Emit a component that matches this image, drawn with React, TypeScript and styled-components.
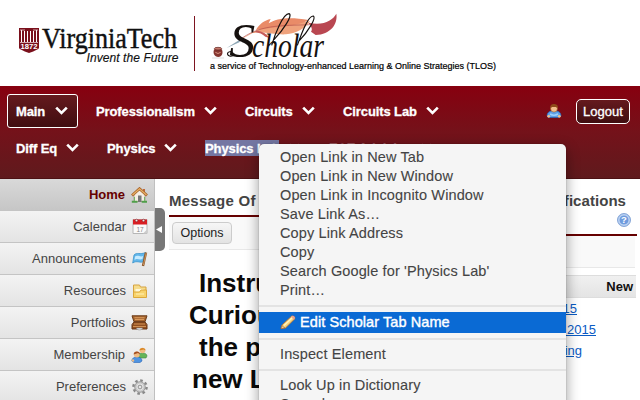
import React from "react";
import styled, { createGlobalStyle, css } from "styled-components";

const Global = createGlobalStyle`
  * { box-sizing: border-box; }
  body { margin: 0; background: #fff; overflow: hidden; }
`;

const Page = styled.div`
  position: relative;
  width: 640px;
  height: 400px;
  overflow: hidden;
  background: #fff;
  color: #444;
  font-family: "Liberation Sans", Arial, sans-serif;
  display: flex;
  flex-direction: column;
`;

const Banner = styled.header`
  flex: none;
  height: 86px;
  display: flex;
  align-items: flex-start;
`;

const UniversityMark = styled.svg`
  flex: none;
  width: 194px;
  height: 86px;
`;

const Divider = styled.div`
  width: 1px;
  height: 55px;
  margin-top: 16px;
  background: #7d1420;
`;

const ScholarBrand = styled.div`
  display: flex;
  flex-direction: column;
  padding-top: 6px;
`;

const ScholarMark = styled.svg`
  width: 150px;
  height: 53px;
  overflow: visible;
`;

const Tagline = styled.div`
  margin-left: 15px;
  font-size: 9px;
  line-height: 14px;
  color: #000;
  white-space: nowrap;
  -webkit-text-stroke: 0.2px #000;
`;

const NavBar = styled.nav`
  flex: none;
  height: 93px;
  padding: 8px 10px 0 7px;
  display: flex;
  justify-content: space-between;
  background: linear-gradient(#87000f, #74121a 50%, #5f1a1d);
  border-bottom: 1px solid #4d1114;
`;

const NavRows = styled.div`
  display: flex;
  flex-direction: column;
  gap: 3px;
`;

const NavRow = styled.div`
  display: flex;
  gap: 9px;
`;

const NavItem = styled.a<{ $active?: boolean }>`
  height: 34px;
  padding: 0 9px 0 8px;
  border: 1px solid transparent;
  border-radius: 3px;
  display: flex;
  align-items: center;
  gap: 9px;
  color: #fff;
  ${(p) =>
    p.$active &&
    css`
      border-color: #fff;
      background: linear-gradient(#651a1e, #400d10);
    `}
`;

const NavLabel = styled.span<{ $w: number; $selected?: boolean }>`
  width: ${(p) => p.$w}px;
  height: 16px;
  line-height: 17px;
  font-size: 13px;
  font-weight: bold;
  letter-spacing: -0.1px;
  white-space: nowrap;
  background: ${(p) => (p.$selected ? "#7477a3" : "transparent")};
  -webkit-text-stroke: 0.3px #fff;
`;

const NavTools = styled.div`
  display: flex;
  align-items: center;
  gap: 14px;
  height: 34px;
`;

const Logout = styled.button`
  width: 54px;
  height: 25px;
  padding: 0;
  border: 1px solid #fff;
  border-radius: 5px;
  background: linear-gradient(#651a1e, #400d10);
  color: #fff;
  font: 13px "Liberation Sans", Arial, sans-serif;
  -webkit-text-stroke: 0.3px #fff;
`;

const Body = styled.div`
  flex: 1;
  display: flex;
  align-items: flex-start;
`;

const Sidebar = styled.aside`
  flex: none;
  width: 155px;
  height: 221px;
  overflow: hidden;
  border-right: 1px solid #c0c0c0;
`;

const SideItem = styled.a<{ $active?: boolean }>`
  height: 32px;
  padding-right: 6px;
  display: flex;
  align-items: center;
  justify-content: flex-end;
  gap: 6px;
  border-bottom: 1px solid #c4c4c4;
  background: ${(p) =>
    p.$active ? "linear-gradient(#d9d9d9, #c6c6c6)" : "linear-gradient(#f3f3f3, #e4e4e4)"};
  color: ${(p) => (p.$active ? "#660000" : "#444")};
  font-weight: ${(p) => (p.$active ? "bold" : "normal")};
  font-size: 13px;
`;

const Collapse = styled.div`
  flex: none;
  width: 10px;
  height: 43px;
  margin-top: 29px;
  border-radius: 0 5px 5px 0;
  background: #777;
  display: flex;
  align-items: center;
`;

const Messages = styled.section`
  flex: none;
  width: 320px;
  margin-left: 4px;
`;

const PanelTitle = styled.h2<{ $right?: boolean }>`
  margin: 0;
  height: 36px;
  padding-top: 11px;
  line-height: 21px;
  font-size: 15px;
  font-weight: bold;
  color: #444;
  letter-spacing: ${(p) => (p.$right ? 0.05 : 0.25)}px;
  white-space: nowrap;
  text-align: ${(p) => (p.$right ? "right" : "left")};
`;

const Rule = styled.div`
  height: 2px;
  background: #660000;
`;

const Toolbar = styled.div`
  height: 33px;
  padding: 5px 3px;
  background: #f9f9f9;
  border-bottom: 1px solid #e8e8e8;
`;

const OptionsButton = styled.button`
  width: 60px;
  height: 22px;
  padding: 0;
  border: 1px solid #ccc;
  border-radius: 4px;
  background: linear-gradient(#f6f6f6, #e3e3e3);
  color: #222;
  font: 12.5px "Liberation Sans", Arial, sans-serif;
`;

const Announcement = styled.div`
  margin-top: 17px;
  font-size: 26px;
  line-height: 32px;
  font-weight: bold;
  color: #0a0a0a;
`;

const Line = styled.div<{ $indent: number }>`
  padding-left: ${(p) => p.$indent}px;
  white-space: nowrap;
`;

const Notifications = styled.section`
  flex: none;
  width: 118px;
  margin-left: 30px;
  display: flex;
  flex-direction: column;
`;

const TitleText = styled.span`
  display: block;
  margin: 0 11px 0 -40px;
`;

const HelpRow = styled.div`
  height: 19px;
  padding-right: 6px;
  display: flex;
  justify-content: flex-end;
  align-items: flex-start;
  margin-top: -2px;
  margin-bottom: 2px;
`;

const NoticeToolbar = styled.div`
  height: 32px;
  margin: 0 2px 7px 0;
  background: #f9f9f9;
  border-bottom: 1px solid #e8e8e8;
`;

const TableHead = styled.div`
  height: 23px;
  margin-right: 1px;
  padding-right: 3px;
  line-height: 22px;
  text-align: right;
  font-size: 13px;
  font-weight: bold;
  color: #111;
  border-top: 1px solid #ddd;
  border-bottom: 1px solid #ddd;
  background: linear-gradient(#f0f0f0, #e4e4e4);
`;

const NoticeLink = styled.a<{ $tail: number }>`
  height: 21px;
  line-height: 22px;
  padding-right: ${(p) => p.$tail}px;
  text-align: right;
  font-size: 13px;
  color: #0a5bc4;
  text-decoration: underline;
  white-space: nowrap;
`;

const Menu = styled.div`
  position: absolute;
  left: 259px;
  top: 144px;
  width: 307px;
  height: 280px;
  padding-top: 4px;
  border-radius: 5px;
  background: #f5f5f5;
  box-shadow: 0 0 1px rgba(0, 0, 0, 0.5), 0 5px 14px rgba(0, 0, 0, 0.4);
`;

const MenuItem = styled.div<{ $highlight?: boolean }>`
  height: ${(p) => (p.$highlight ? 21 : 19)}px;
  padding: 0 13px 0 21px;
  display: flex;
  align-items: center;
  gap: 4px;
  font-size: 14.5px;
  line-height: 19px;
  letter-spacing: ${(p) => (p.$highlight ? 0.08 : 0.13)}px;
  white-space: nowrap;
  color: ${(p) => (p.$highlight ? "#fff" : "#444")};
  background: ${(p) => (p.$highlight ? "#0a6ad4" : "transparent")};
  -webkit-text-stroke: ${(p) => (p.$highlight ? "0.4px #fff" : "0.1px #444")};
`;

const Separator = styled.div`
  height: 2px;
  margin: 5px 0;
  background: #e3e3e3;
`;

const Submenu = styled.svg`
  margin-left: auto;
`;

const Chevron = () => (
  <svg width="13" height="10" viewBox="0 0 13 10">
    <path d="M1.2 1.6 6.5 7 11.8 1.6" fill="none" stroke="#fff" strokeWidth="2.6" />
  </svg>
);

const Person = () => (
  <svg width="16" height="16" viewBox="0 0 16 16">
    <path d="M1 13c0-3 2-5 5-5h4c3 0 5 2 5 5l-2 1.5H3z" fill="#5d9fe8" stroke="#2461b5" strokeWidth=".7" />
    <path d="M4 11q4 2.500 8 0" stroke="#9bd0ff" fill="none" strokeWidth="1.5" />
    <ellipse cx="8" cy="5.5" rx="3.4" ry="3.6" fill="#f2bd8b" stroke="#9b5a27" strokeWidth=".5" />
    <path d="M4.300 5.500C3.800 2 6 .9 8.400 1c2.800.1 4 2 3.300 4.500L10 4l-4 .1z" fill="#8e4a19" />
    <circle cx="2.7" cy="13.3" r="1.4" fill="#f2bd8b" />
    <circle cx="13.3" cy="13.3" r="1.4" fill="#f2bd8b" />
  </svg>
);

const HouseIcon = () => (
  <svg width="17" height="16" viewBox="0 0 17 16">
    <path d="M3 7v7.5h11V7L8.500 2z" fill="#f4eee5" stroke="#a58c72" strokeWidth=".7" />
    <path d="M12 2h2v4h-2z" fill="#bd6a3b" />
    <path d="M1 8.500 8.500 1.700 16 8.500" fill="none" stroke="#a9652b" strokeWidth="2.8" />
    <path d="M1.500 8 8.500 1.700 15.500 8" fill="none" stroke="#e7b066" strokeWidth="1.200" />
    <path d="M7 8.500h3.500V15H7z" fill="#777" />
    <path d="M.8 14.700h5.700M10.700 14.700H16" stroke="#4f9f49" strokeWidth="2" />
    <path d="M3.500 10v4M13.500 10v4" stroke="#73b867" strokeWidth="1" />
  </svg>
);

const CalendarIcon = () => (
  <svg width="16" height="17" viewBox="0 0 16 17">
    <path d="M1 1.500h14v14H1z" fill="#fafafa" stroke="#b6b6b6" />
    <path d="M1 1.500h14V6.500H1z" fill="#d91f24" />
    <circle cx="4.500" cy="2.500" r="1.300" fill="#eee" stroke="#801015" strokeWidth=".6" />
    <circle cx="11.500" cy="2.500" r="1.300" fill="#eee" stroke="#801015" strokeWidth=".6" />
    <text x="8" y="13.500" fontSize="6.500" fill="#888" textAnchor="middle">17</text>
    <path d="m11 15.500 4-4v4z" fill="#ccc" />
  </svg>
);

const FlagIcon = () => (
  <svg width="16" height="16" viewBox="0 0 16 16">
    <path d="M2 4C5 .8 8 4 13.500 1.500L12 10.500C8 12.500 5 9 .7 12z" fill="#62b6ea" stroke="#3c94ca" strokeWidth=".8" />
    <path d="M3 5.500c3-2 5 1 8-.5L10.500 8C7 9.500 5 6.500 2.500 9z" fill="#c5ebff" />
    <path d="m14 1.500-3 13.500" stroke="#8f5a2c" strokeWidth="2.400" />
    <path d="m14.200 2-2.800 12" stroke="#d6a26c" strokeWidth=".8" />
  </svg>
);

const FolderIcon = () => (
  <svg width="16" height="16" viewBox="0 0 16 16">
    <path d="M1.500 2h6l1 2h5.500v10H1.500z" fill="#f6dc8c" stroke="#d5a340" />
    <path d="M3.500 6h8v3h-8z" fill="#fff8da" />
    <path d="M1.500 14.500V9h6l1.500-2h5.500v7.500z" fill="#f8d36c" stroke="#dca83b" />
    <path d="M4 11h8" stroke="#fff2b7" />
  </svg>
);

const BriefcaseIcon = () => (
  <svg width="17" height="16" viewBox="0 0 17 16">
    <path d="M1 .8h15l-2 6H3z" fill="#a86730" stroke="#6b3b18" />
    <path d="M3.500 2.700h10M4 4.500h9" stroke="#d99a5c" />
    <path d="m3 7-2 2.500V14h15V9.500L14 7z" fill="#925021" stroke="#653514" />
    <path d="M3 9h11M2 11.500h13" stroke="#d09052" />
    <path d="M5.500 13h6c0 2.500-6 2.500-6 0z" fill="#eee" stroke="#888" strokeWidth=".6" />
  </svg>
);

const PeopleIcon = () => (
  <svg width="17" height="16" viewBox="0 0 17 16">
    <path d="M7 9c0-4 9-4 9 0l-1 2H8z" fill="#65b458" stroke="#3c8841" strokeWidth=".6" />
    <circle cx="11.500" cy="3.500" r="2.800" fill="#f0bb83" />
    <path d="M8.500 3.500C8 0 15 0 14.500 3.500l-2-1z" fill="#d98724" />
    <path d="M.8 14C.8 8.500 11 8.500 11 14l-2 1.500H3z" fill="#4f94e2" stroke="#2864b5" strokeWidth=".6" />
    <circle cx="5.800" cy="7.500" r="2.900" fill="#f0bb83" />
    <path d="M2.700 7.500C2.200 3.500 9.500 3.500 9 7.500L7 6z" fill="#a44f21" />
    <circle cx="2" cy="13.500" r="1.200" fill="#f0bb83" />
  </svg>
);

const GearIcon = () => (
  <svg width="16" height="16" viewBox="0 0 16 16">
    <circle cx="8" cy="8" r="6.600" fill="none" stroke="#888" strokeWidth="2.400" strokeDasharray="2.600 2.580" />
    <circle cx="8" cy="8" r="5.300" fill="#cacaca" stroke="#8d8d8d" strokeWidth=".8" />
    <circle cx="8" cy="8" r="3" fill="#b4b4b4" stroke="#eee" strokeWidth=".8" />
    <circle cx="8" cy="8" r="1.600" fill="#eee" stroke="#888" strokeWidth=".6" />
  </svg>
);

const HelpIcon = () => (
  <svg width="14" height="14" viewBox="0 0 14 14">
    <circle cx="7" cy="7" r="6.500" fill="#a8c5ed" stroke="#7196ce" strokeWidth=".8" />
    <circle cx="7" cy="7" r="5" fill="#6f9bdd" stroke="#dce9fb" strokeWidth=".7" />
    <text x="7" y="10.400" textAnchor="middle" fontSize="9.500" fontWeight="bold" fill="#fff">?</text>
  </svg>
);

const PencilIcon = () => (
  <svg width="16" height="15" viewBox="0 0 16 15">
    <path d="M1 13.500 2 10 11.500 1.200c1.800-.9 4 .8 3.200 2.800L5.500 13z" fill="#f6d27c" stroke="#b26b2b" strokeWidth=".8" />
    <path d="m4 10.500 8-7.500" stroke="#fff4bc" strokeWidth="1.600" />
    <path d="m11 1.500 1-.6c1.800-.5 3.500 1.300 2.700 3.100l-.8.800z" fill="#e5a094" />
    <path d="m1 13.800.8-3.200 3.100 2.400z" fill="#f0c895" stroke="#8a5528" strokeWidth=".5" />
  </svg>
);

const VirginiaTech = () => (
  <UniversityMark viewBox="0 0 194 86">
    <path d="M19 28h20v20q-.5 1.500-10 5-9.500-3.500-10-5z" fill="#7a101c" />
    <path d="M21.500 30v12M36.500 30v12M24.500 31v11M33.500 31v11M27.500 31v11M30.500 31v11" stroke="#fff" strokeWidth="1" />
    <path d="M20 30h5M33 30h5M20 42.500h18" stroke="#e8cdd0" strokeWidth=".8" />
    <text x="20.500" y="49" textLength="17" lengthAdjust="spacingAndGlyphs" fontSize="7" fontWeight="bold" fill="#fff" fontFamily="Liberation Sans">1872</text>
    <text x="42" y="47.500" textLength="135" lengthAdjust="spacingAndGlyphs" fontSize="28.500" fill="#111" stroke="#111" strokeWidth=".45" fontFamily="Liberation Serif">VirginiaTech</text>
    <text x="86.500" y="62" textLength="92" fontSize="12" fontStyle="italic" fill="#111" stroke="#111" strokeWidth=".15" fontFamily="Liberation Sans">Invent the Future</text>
  </UniversityMark>
);

const Scholar = () => (
  <ScholarMark viewBox="15 18 450 159">
    <path d="M150 120C180 98 205 88 232 80c28-14 80-12 128-16-15 22-42 37-72 39-30 2-66-9-100-4z" fill="#efa27c" />
    <path d="M198 90c8-16 26-30 44-33l-6 13c24-16 64-20 120-10-30 18-80 20-116 24z" fill="#e98b68" />
    <path d="M200 92c18 2 30 8 38 22l-12-4c-8-8-18-12-32-14z" fill="#c75c59" />
    <path d="M355 68c45 10 72-6 84-27 5 32-18 62-62 64l-14-10c6-8 0-18-8-27z" fill="#b94751" />
    <path d="M146 122c60-48 120-45 222-48" fill="none" stroke="#b4504a" strokeWidth="2" />
    <path d="m110 144 46-29-8 12z" fill="#8ea7b5" />
    <path d="M72 149c4-6 20-6 24 0 4 10 0 21-11 22-12-1-17-12-13-22z" fill="#84352f" />
    <ellipse cx="84" cy="146" rx="11" ry="4" fill="#c77a6c" stroke="#5b201c" strokeWidth="2" />
    <path d="M76 157q8 7 16 0" stroke="#d89382" strokeWidth="3" fill="none" />
    <path d="M66 174h36" stroke="#ddd" strokeWidth="3" />
    <text x="118" y="171" fontFamily="Liberation Serif" fontStyle="italic" fontSize="144" fill="#16110f" textLength="78" lengthAdjust="spacingAndGlyphs">S</text>
    <path d="M134 164c-10 8-24 4-21-5 3-5 10-5 13-1" stroke="#16110f" strokeWidth="3.500" fill="none" />
    <text x="186" y="172" fontFamily="Liberation Serif" fontStyle="italic" fontSize="98" fill="#16110f" textLength="216" lengthAdjust="spacingAndGlyphs">cholar</text>
    <path d="M245 136c10-34 34-95 52-95 13 4-18 50-45 78M322 136c12-34 32-90 48-88 10 6-16 46-42 74" stroke="#16110f" strokeWidth="3.500" fill="none" />
  </ScholarMark>
);

const sideItems = [
  { label: "Home", icon: <HouseIcon />, active: true },
  { label: "Calendar", icon: <CalendarIcon /> },
  { label: "Announcements", icon: <FlagIcon /> },
  { label: "Resources", icon: <FolderIcon /> },
  { label: "Portfolios", icon: <BriefcaseIcon /> },
  { label: "Membership", icon: <PeopleIcon /> },
  { label: "Preferences", icon: <GearIcon /> },
];

const navRows = [
  [
    { label: "Main", w: 30, active: true },
    { label: "Professionalism", w: 99 },
    { label: "Circuits", w: 48 },
    { label: "Circuits Lab", w: 74 },
  ],
  [
    { label: "Diff Eq", w: 41 },
    { label: "Physics", w: 48 },
    { label: "Physics Lab", w: 74, selected: true },
    { label: "ECE Advising", w: 82 },
  ],
] as { label: string; w: number; active?: boolean; selected?: boolean }[][];

const linkActions = [
  "Open Link in New Tab",
  "Open Link in New Window",
  "Open Link in Incognito Window",
  "Save Link As…",
  "Copy Link Address",
  "Copy",
  "Search Google for 'Physics Lab'",
  "Print…",
];

export default function App() {
  return (
    <Page>
      <Global />
      <Banner>
        <VirginiaTech />
        <Divider />
        <ScholarBrand>
          <Scholar />
          <Tagline>a service of Technology-enhanced Learning &amp; Online Strategies (TLOS)</Tagline>
        </ScholarBrand>
      </Banner>
      <NavBar>
        <NavRows>
          {navRows.map((row, i) => (
            <NavRow key={i}>
              {row.map((n) => (
                <NavItem key={n.label} $active={n.active}>
                  <NavLabel $w={n.w} $selected={n.selected}>{n.label}</NavLabel>
                  <Chevron />
                </NavItem>
              ))}
            </NavRow>
          ))}
        </NavRows>
        <NavTools>
          <Person />
          <Logout>Logout</Logout>
        </NavTools>
      </NavBar>
      <Body>
        <Sidebar>
          {sideItems.map((s) => (
            <SideItem key={s.label} $active={s.active}>
              <span>{s.label}</span>
              {s.icon}
            </SideItem>
          ))}
        </Sidebar>
        <Collapse>
          <svg width="9" height="9" viewBox="0 0 9 9">
            <path d="M1 4.500 7 1v7z" fill="#fff" />
          </svg>
        </Collapse>
        <Messages>
          <PanelTitle>Message Of The Day</PanelTitle>
          <Rule />
          <Toolbar>
            <OptionsButton>Options</OptionsButton>
          </Toolbar>
          <Announcement>
            <Line $indent={30}>Instru</Line>
            <Line $indent={20}>Curiou</Line>
            <Line $indent={30}>the p</Line>
            <Line $indent={23}>new L</Line>
          </Announcement>
        </Messages>
        <Notifications>
          <PanelTitle $right>
            <TitleText>Recent Notifications</TitleText>
          </PanelTitle>
          <HelpRow>
            <HelpIcon />
          </HelpRow>
          <Rule />
          <NoticeToolbar />
          <TableHead>New</TableHead>
          <NoticeLink $tail={60}>15</NoticeLink>
          <NoticeLink $tail={41}>&nbsp;2015</NoticeLink>
          <NoticeLink $tail={55}>ing</NoticeLink>
        </Notifications>
      </Body>
      <Menu>
        {linkActions.map((a) => (
          <MenuItem key={a}>{a}</MenuItem>
        ))}
        <Separator />
        <MenuItem $highlight>
          <PencilIcon />
          Edit Scholar Tab Name
        </MenuItem>
        <Separator />
        <MenuItem>Inspect Element</MenuItem>
        <Separator />
        <MenuItem>Look Up in Dictionary</MenuItem>
        <MenuItem>
          Speech
          <Submenu width="8" height="12" viewBox="0 0 8 12">
            <path d="M0 1v10l7-5z" fill="#444" />
          </Submenu>
        </MenuItem>
      </Menu>
    </Page>
  );
}
